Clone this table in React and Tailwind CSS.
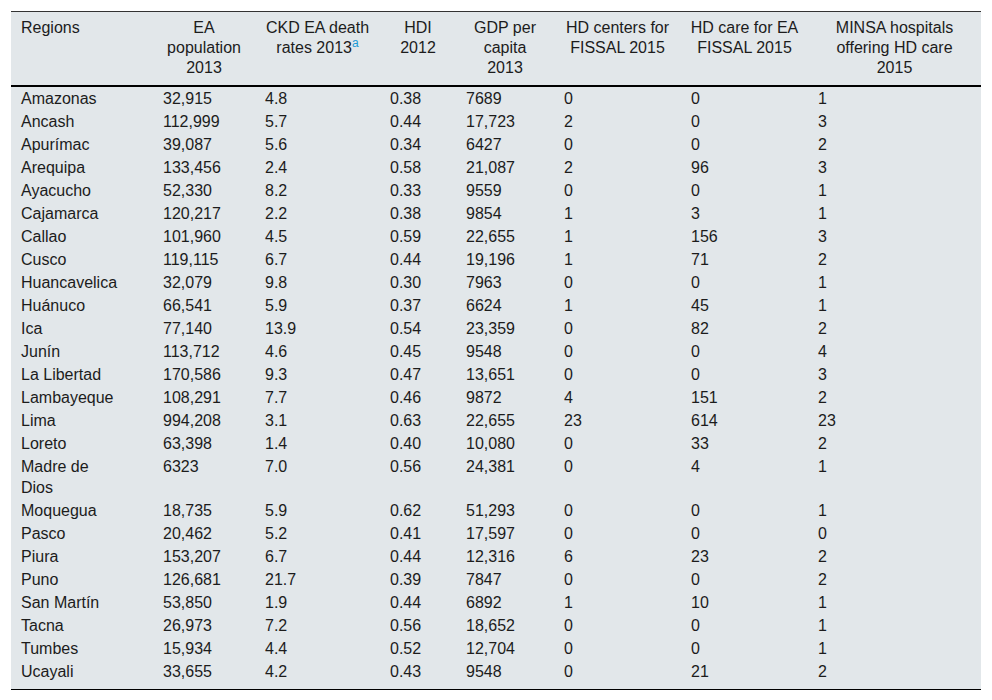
const rows = [
  ['Amazonas', '32,915', '4.8', '0.38', '7689', '0', '0', '1'],
  ['Ancash', '112,999', '5.7', '0.44', '17,723', '2', '0', '3'],
  ['Apurímac', '39,087', '5.6', '0.34', '6427', '0', '0', '2'],
  ['Arequipa', '133,456', '2.4', '0.58', '21,087', '2', '96', '3'],
  ['Ayacucho', '52,330', '8.2', '0.33', '9559', '0', '0', '1'],
  ['Cajamarca', '120,217', '2.2', '0.38', '9854', '1', '3', '1'],
  ['Callao', '101,960', '4.5', '0.59', '22,655', '1', '156', '3'],
  ['Cusco', '119,115', '6.7', '0.44', '19,196', '1', '71', '2'],
  ['Huancavelica', '32,079', '9.8', '0.30', '7963', '0', '0', '1'],
  ['Huánuco', '66,541', '5.9', '0.37', '6624', '1', '45', '1'],
  ['Ica', '77,140', '13.9', '0.54', '23,359', '0', '82', '2'],
  ['Junín', '113,712', '4.6', '0.45', '9548', '0', '0', '4'],
  ['La Libertad', '170,586', '9.3', '0.47', '13,651', '0', '0', '3'],
  ['Lambayeque', '108,291', '7.7', '0.46', '9872', '4', '151', '2'],
  ['Lima', '994,208', '3.1', '0.63', '22,655', '23', '614', '23'],
  ['Loreto', '63,398', '1.4', '0.40', '10,080', '0', '33', '2'],
  ['Madre de Dios', '6323', '7.0', '0.56', '24,381', '0', '4', '1'],
  ['Moquegua', '18,735', '5.9', '0.62', '51,293', '0', '0', '1'],
  ['Pasco', '20,462', '5.2', '0.41', '17,597', '0', '0', '0'],
  ['Piura', '153,207', '6.7', '0.44', '12,316', '6', '23', '2'],
  ['Puno', '126,681', '21.7', '0.39', '7847', '0', '0', '2'],
  ['San Martín', '53,850', '1.9', '0.44', '6892', '1', '10', '1'],
  ['Tacna', '26,973', '7.2', '0.56', '18,652', '0', '0', '1'],
  ['Tumbes', '15,934', '4.4', '0.52', '12,704', '0', '0', '1'],
  ['Ucayali', '33,655', '4.2', '0.43', '9548', '0', '21', '2'],
];

const widths = [142, 102, 125, 76, 98, 127, 127, 173];

export default function App() {
  return (
    <div className="bg-white w-[992px] h-[700px] pt-[11px] px-[11px] font-['Liberation_Sans',Arial,sans-serif] text-[16px] text-[#1c1c1c]">
      <table className="w-[970px] table-fixed border-collapse bg-[#e2e7ea]">
        <colgroup>
          {widths.map((w, i) => (
            <col key={i} style={{ width: w }} />
          ))}
        </colgroup>
        <thead>
          <tr className="border-t border-[#333] border-b-2 border-b-black align-top leading-[20px]">
            <th className="font-normal text-left pl-[10px] pt-[6px] pb-[7px]">Regions</th>
            <th className="font-normal text-center px-[10px] pt-[6px] pb-[7px]">EA population 2013</th>
            <th className="font-normal text-center px-[8px] pt-[6px] pb-[7px]">
              CKD EA death rates 2013<sup className="text-[12px] leading-none text-[#1a9ad6]">a</sup>
            </th>
            <th className="font-normal text-center px-[6px] pt-[6px] pb-[7px]">HDI 2012</th>
            <th className="font-normal text-center px-[10px] pt-[6px] pb-[7px]">GDP per capita 2013</th>
            <th className="font-normal text-center px-[8px] pt-[6px] pb-[7px]">HD centers for FISSAL 2015</th>
            <th className="font-normal text-center px-[8px] pt-[6px] pb-[7px]">HD care for EA FISSAL 2015</th>
            <th className="font-normal text-center px-[20px] pt-[6px] pb-[7px]">MINSA hospitals offering HD care 2015</th>
          </tr>
        </thead>
        <tbody className="border-b border-black">
          {rows.map((r, i) => (
            <tr key={r[0]} className="align-top leading-[21px]">
              {r.map((c, j) => (
                <td
                  key={j}
                  className={`pl-[10px] pt-px ${i === rows.length - 1 ? 'pb-[7px]' : 'pb-px'} ${j === 0 ? 'pr-[32px]' : 'pr-[4px]'}`}
                >
                  {c}
                </td>
              ))}
            </tr>
          ))}
        </tbody>
      </table>
    </div>
  );
}
